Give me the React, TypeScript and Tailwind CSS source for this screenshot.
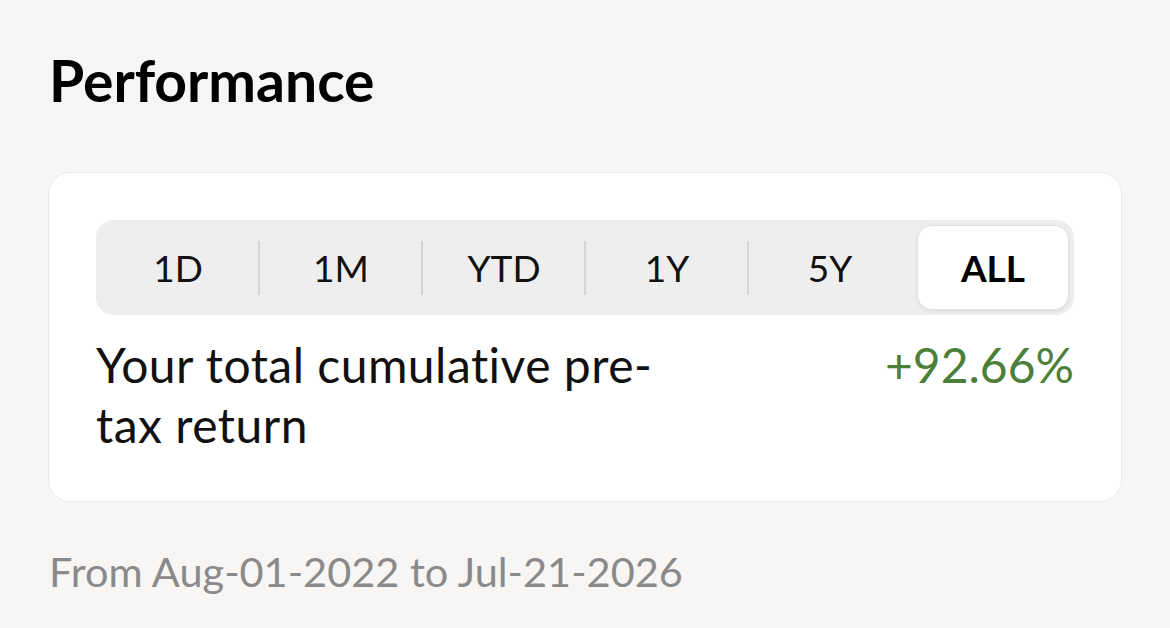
import { useState } from "react";

const RANGES = ["1D", "1M", "YTD", "1Y", "5Y", "ALL"];

function RangePicker({ value, onChange }: { value: string; onChange: (v: string) => void }) {
  const idx = RANGES.indexOf(value);
  return (
    <div className="flex h-[95px] items-stretch rounded-[18px] bg-[#eeeeee]">
      {RANGES.map((r, i) => {
        const active = r === value;
        // hide the divider next to the selected pill
        const showDivider = i > 0 && i !== idx && i - 1 !== idx;
        return (
          <div key={r} className="flex flex-1 items-center">
            <div
              className={`-ml-px h-[54px] w-[2px] ${showDivider ? "bg-[#d6d6d6]" : "bg-transparent"}`}
            />
            <div className={`flex h-full flex-1 ${active ? "p-[6px]" : ""}`}>
              <button
                onClick={() => onChange(r)}
                className={`flex h-full flex-1 items-center justify-center rounded-[14px] text-[37px] ${
                  active
                    ? "bg-white font-bold text-black shadow-[0_1px_4px_rgba(0,0,0,0.12)] ring-1 ring-[#e2e2e2]"
                    : "text-[#111111]"
                }`}
              >
                {r}
              </button>
            </div>
          </div>
        );
      })}
    </div>
  );
}

export default function App() {
  const [range, setRange] = useState("ALL");

  return (
    <div
      className="min-h-[628px] w-[1170px] bg-[#f7f6f5] px-[48px] pt-[40px]"
      style={{ fontFamily: "Lato, 'Noto Sans', sans-serif" }}
    >
      <h1 className="pl-[1px] text-[57px] font-bold leading-[80px] text-black">Performance</h1>

      <div className="mt-[52px] rounded-[22px] border border-[#ebebeb] bg-white px-[47px] pt-[47px] pb-[46px]">
        <RangePicker value={range} onChange={setRange} />

        <div className="mt-[20px] flex items-start justify-between">
          <p className="w-[580px] text-[48px] leading-[60px] tracking-[0.01em] text-[#111111]">
            Your total cumulative pre-tax return
          </p>
          <span className="text-[48px] leading-[60px] text-[#4b7f3a]">+92.66%</span>
        </div>
      </div>

      <p className="mt-[40px] pl-[1px] text-[41.5px] leading-[58px] text-[#8a8a8a]">
        From Aug-01-2022 to Jul-21-2026
      </p>
    </div>
  );
}
